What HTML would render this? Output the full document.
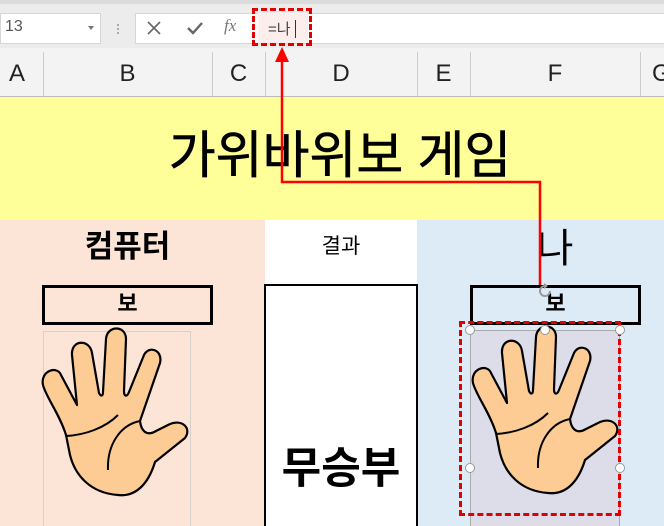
<!DOCTYPE html>
<html><head><meta charset="utf-8">
<style>
*{margin:0;padding:0;box-sizing:border-box}
html,body{width:664px;height:526px;overflow:hidden}
body{position:relative;background:#fff;font-family:"Liberation Sans","Noto Sans CJK KR",sans-serif}
.a{position:absolute}
.t{position:absolute;white-space:nowrap;text-align:center}
</style></head><body>
<div class="a" style="left:0;top:0;width:664px;height:48px;background:#ececec"></div>
<div class="a" style="left:0;top:0;width:664px;height:4px;background:#dcdcdc"></div>
<div class="a" style="left:0;top:13px;width:101px;height:31px;background:#fff;border:1px solid #d6d6d6"></div>
<div class="t" style="left:5px;top:18px;font-size:16px;color:#555">13</div>
<div class="a" style="left:88px;top:26px;width:0;height:0;border-left:3px solid transparent;border-right:3px solid transparent;border-top:4px solid #777"></div>
<div class="a" style="left:117px;top:24px;width:2px;height:2px;background:#aaa;box-shadow:0 4px #aaa,0 8px #aaa"></div>
<div class="a" style="left:135px;top:13px;width:529px;height:31px;background:#fff;border:1px solid #d6d6d6;border-right:none"></div>
<svg class="a" style="left:146px;top:20px" width="16" height="16"><path d="M2 2L14 14M14 2L2 14" stroke="#666" stroke-width="1.6"/></svg>
<svg class="a" style="left:186px;top:20px" width="18" height="16"><path d="M2 8L7 13L16 3" stroke="#666" stroke-width="2.4" fill="none"/></svg>
<div class="t" style="left:224px;top:16px;font-family:'Liberation Serif',serif;font-style:italic;font-size:17px;color:#777">fx</div>
<div class="a" style="left:258px;top:13px;width:50px;height:30px;background:#fdeeee"></div>
<div class="t" style="left:268px;top:18px;font-size:15px;color:#444">=나</div>
<div class="a" style="left:295px;top:20px;width:1px;height:18px;background:#333"></div>
<div class="a" style="left:252px;top:8px;width:60px;height:38px;border:3px dashed #e00000"></div>
<div class="a" style="left:0;top:48px;width:664px;height:49px;background:#f3f3f3;border-bottom:1px solid #bbb"></div>
<div class="a" style="left:43px;top:52px;width:1px;height:44px;background:#ccc"></div>
<div class="a" style="left:212px;top:52px;width:1px;height:44px;background:#ccc"></div>
<div class="a" style="left:265px;top:52px;width:1px;height:44px;background:#ccc"></div>
<div class="a" style="left:417px;top:52px;width:1px;height:44px;background:#ccc"></div>
<div class="a" style="left:470px;top:52px;width:1px;height:44px;background:#ccc"></div>
<div class="a" style="left:640px;top:52px;width:1px;height:44px;background:#ccc"></div>
<div class="t" style="left:0;width:34px;top:60px;font-size:24px;color:#222">A</div>
<div class="t" style="left:43px;width:169px;top:60px;font-size:24px;color:#222">B</div>
<div class="t" style="left:212px;width:53px;top:60px;font-size:24px;color:#222">C</div>
<div class="t" style="left:265px;width:152px;top:60px;font-size:24px;color:#222">D</div>
<div class="t" style="left:417px;width:53px;top:60px;font-size:24px;color:#222">E</div>
<div class="t" style="left:470px;width:170px;top:60px;font-size:24px;color:#222">F</div>
<div class="t" style="left:652px;top:60px;font-size:24px;color:#222">G</div>
<div class="a" style="left:0;top:97px;width:664px;height:123px;background:#ffff99"></div>
<div class="t" style="left:0;width:680px;top:124px;font-size:51px;line-height:64px;color:#000;-webkit-text-stroke:0.6px #000">가위바위보 게임</div>
<div class="a" style="left:0;top:220px;width:265px;height:306px;background:#fce4d6"></div>
<div class="a" style="left:417px;top:220px;width:247px;height:306px;background:#ddebf7"></div>
<div class="t" style="left:43px;width:169px;top:226px;font-size:31px;font-weight:bold;line-height:42px">컴퓨터</div>
<div class="t" style="left:265px;width:152px;top:232px;font-size:21px;line-height:30px">결과</div>
<div class="t" style="left:470px;width:170px;top:224px;font-size:40px;line-height:50px">나</div>
<div class="a" style="left:42px;top:285px;width:171px;height:40px;border:3px solid #000;background:#fce4d6"></div>
<div class="t" style="left:42px;width:171px;top:288px;font-size:22px;font-weight:bold;line-height:32px">보</div>
<div class="a" style="left:264px;top:284px;width:154px;height:250px;border:2px solid #000;background:#fff"></div>
<div class="t" style="left:264px;width:154px;top:440px;font-size:43px;font-weight:bold;line-height:58px">무승부</div>
<div class="a" style="left:470px;top:285px;width:171px;height:40px;border:3px solid #000;background:#ddebf7"></div>
<div class="t" style="left:470px;width:171px;top:288px;font-size:22px;font-weight:bold;line-height:32px">보</div>
<div class="a" style="left:43px;top:331px;width:148px;height:200px;border:1px solid #d8d0cc"></div>
<svg class="a" style="left:40px;top:325px" width="160" height="180" viewBox="0 0 160 180">
<g id="hand"><path d="M26,110 C20,90 6,72 3,60 C0,46 17,40 21,50 L37,80 L32,30 C31,14 50,14 52,28 L59,68 C61,72 63,71 63,67 L66,14 C67,0 86,0 86,14 L84,66 C84,72 87,72 89,67 L104,30 C109,20 123,25 120,38 L100,96 C101,105 106,112 116,106 L130,99 C142,94 152,103 145,113 L115,137 C108,160 95,172 78,170 C50,168 35,150 30,130 Z" fill="#fdcb94" stroke="#000" stroke-width="2.2" stroke-linejoin="round"/>
<path d="M26,111 C45,110 65,103 78,90 M68,145 C67,120 80,100 100,96" fill="none" stroke="#000" stroke-width="2"/></g>
</svg>
<div class="a" style="left:470px;top:330px;width:150px;height:200px;background:#dcdde8;border:1px solid #aaa"></div>
<svg class="a" style="left:470px;top:323px" width="160" height="180" viewBox="0 0 160 180">
<use href="#hand"/>
</svg>
<div class="a" style="left:459px;top:321px;width:162px;height:195px;border:3px dashed #e00000"></div>
<div class="a" style="left:465px;top:325px;width:10px;height:10px;border:1.5px solid #999;border-radius:50%;background:#fff"></div>
<div class="a" style="left:540px;top:325px;width:10px;height:10px;border:1.5px solid #999;border-radius:50%;background:#fff"></div>
<div class="a" style="left:615px;top:325px;width:10px;height:10px;border:1.5px solid #999;border-radius:50%;background:#fff"></div>
<div class="a" style="left:465px;top:463px;width:10px;height:10px;border:1.5px solid #999;border-radius:50%;background:#fff"></div>
<div class="a" style="left:615px;top:463px;width:10px;height:10px;border:1.5px solid #999;border-radius:50%;background:#fff"></div>
<svg class="a" style="left:536px;top:282px" width="18" height="18"><path d="M14 9A5 5 0 1 1 9 4" stroke="#999" stroke-width="2" fill="none"/><path d="M8 1L12 4L8 7Z" fill="#999"/></svg>
<svg class="a" style="left:0;top:0" width="664" height="526">
<path d="M540,285 L540,182 L282,182 L282,60" stroke="#f00" stroke-width="2.5" fill="none"/>
<path d="M275,62 L282,47 L289,62 Z" fill="#f00"/>
</svg>
</body></html>
